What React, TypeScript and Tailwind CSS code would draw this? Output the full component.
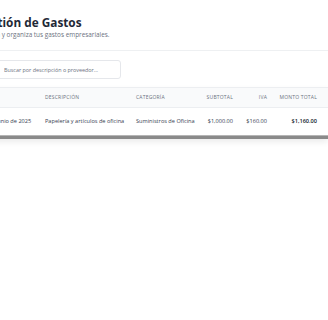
import React from "react";

const font = { fontFamily: '"Open Sans", "Liberation Sans", sans-serif' };

interface Expense {
  fecha: string;
  descripcion: string;
  categoria: string;
  subtotal: string;
  iva: string;
  total: string;
}

const expenses: Expense[] = [
  {
    fecha: "15 de junio de 2025",
    descripcion: "Papelería y artículos de oficina",
    categoria: "Suministros de Oficina",
    subtotal: "$1,000.00",
    iva: "$160.00",
    total: "$1,160.00",
  },
];

const cols = "grid grid-cols-[71px_91px_64px_33px_34px_50px_11px]";

export default function App() {
  return (
    <div className="w-[328px] h-[320px] overflow-hidden bg-white" style={font}>
      <div className="w-[354px] -ml-[26px]">
        {/* header */}
        <header className="pt-[15px] pb-[11px] pl-[2px] border-b border-[#eef0f2]">
          <h1 className="text-[11.8px] leading-[14px] font-bold text-[#1f2937] whitespace-nowrap">
            Gestión de Gastos
          </h1>
          <p className="text-[6.4px] leading-[8px] mt-[2px] text-[#6b7280] whitespace-nowrap">
            Registra y organiza tus gastos empresariales.
          </p>
        </header>

        {/* filtros */}
        <div className="pt-[9px] pb-[8px] pl-[22px]">
          <input
            type="text"
            placeholder="Buscar por descripción o proveedor..."
            className="block w-[125px] h-[19px] rounded-[3px] border border-[#e5e7eb] pl-[7px] text-[5.4px] text-[#374151] placeholder-[#6b7280] outline-none"
          />
        </div>

        {/* tabla */}
        <div className="bg-white shadow-[0_3px_6px_rgba(0,0,0,0.08)]">
          <div className={`${cols} h-[21px] items-center bg-[#f9fafb] border-y border-[#eceef1] text-[5px] uppercase tracking-[0.04em] text-[#6b7280] whitespace-nowrap`}>
            <div className="pl-[6px]">Fecha</div>
            <div>Descripción</div>
            <div>Categoría</div>
            <div className="text-right">Subtotal</div>
            <div className="text-right">IVA</div>
            <div className="text-right">Monto total</div>
            <div />
          </div>
          {expenses.map((e, i) => (
            <div
              key={i}
              className={`${cols} h-[27px] items-center text-[5.6px] text-[#374151] whitespace-nowrap`}
            >
              <div className="pl-[6px]">{e.fecha}</div>
              <div>{e.descripcion}</div>
              <div>{e.categoria}</div>
              <div className="text-right">{e.subtotal}</div>
              <div className="text-right">{e.iva}</div>
              <div className="text-right font-semibold text-[#111827]">{e.total}</div>
              <div />
            </div>
          ))}
          {/* barra de scroll */}
          <div className="h-[4px] bg-[#8a8a8a] border-t border-[#b5b5b5]" />
        </div>
      </div>
    </div>
  );
}
